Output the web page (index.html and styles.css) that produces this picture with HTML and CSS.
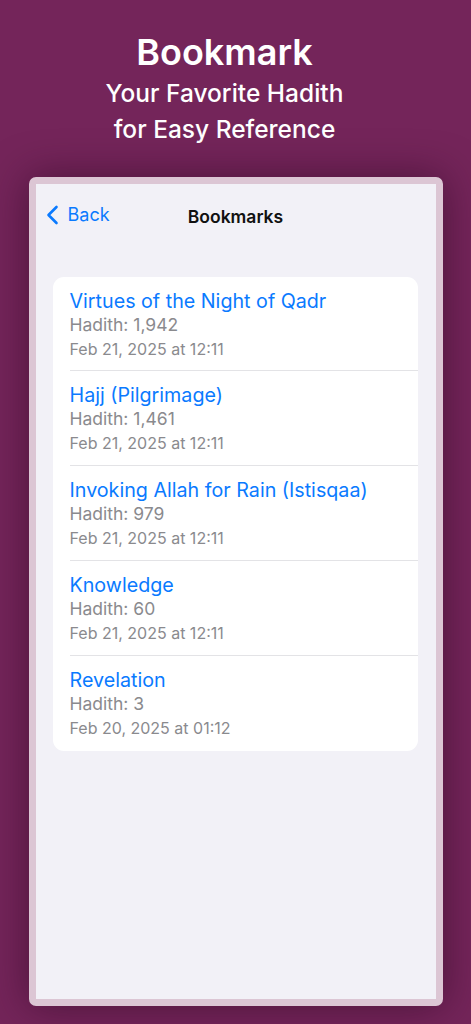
FILE: index.html
```html
<!DOCTYPE html>
<html>
<head>
<title>Bookmark</title>
<link rel="stylesheet" href="styles.css">
</head>
<body>

<div id="promo">
  <h1>Bookmark</h1>
  <p>Your Favorite Hadith<br>for Easy Reference</p>
</div>

<div id="device">
  <div id="screen">
    <div class="nav">
      <a class="back">
        <svg width="13" height="20" viewBox="0 0 13 20"><path d="M10.5 2 L2.5 10 L10.5 18" fill="none" stroke="#0a7aff" stroke-width="2.6" stroke-linecap="round" stroke-linejoin="round"/></svg>
        <span>Back</span>
      </a>
      <div class="nav-title">Bookmarks</div>
    </div>

    <div class="list">
      <div class="row">
        <div class="title">Virtues of the Night of Qadr</div>
        <div class="num">Hadith: 1,942</div>
        <div class="date">Feb 21, 2025 at 12:11</div>
      </div>
      <div class="row">
        <div class="title">Hajj (Pilgrimage)</div>
        <div class="num">Hadith: 1,461</div>
        <div class="date">Feb 21, 2025 at 12:11</div>
      </div>
      <div class="row">
        <div class="title">Invoking Allah for Rain (Istisqaa)</div>
        <div class="num">Hadith: 979</div>
        <div class="date">Feb 21, 2025 at 12:11</div>
      </div>
      <div class="row">
        <div class="title">Knowledge</div>
        <div class="num">Hadith: 60</div>
        <div class="date">Feb 21, 2025 at 12:11</div>
      </div>
      <div class="row">
        <div class="title">Revelation</div>
        <div class="num">Hadith: 3</div>
        <div class="date">Feb 20, 2025 at 01:12</div>
      </div>
    </div>
  </div>
</div>

</body>
</html>
```

FILE: styles.css
```css
body, html {
  margin: 0;
  height: 100%;
}

body {
  background-color: #74255a;
  font-family: Inter, "Noto Sans", sans-serif;
  display: flex;
  flex-direction: column;
  align-items: center;
}

#promo {
  color: white;
  text-align: center;
  padding-top: 31px;
  margin-right: 22px;
}
#promo h1 {
  margin: 0;
  font-size: 36px;
  font-weight: 600;
  line-height: 42px;
}
#promo p {
  margin: 2px 0 0;
  font-size: 24.5px;
  font-weight: 500;
  line-height: 36px;
}

#device {
  margin-top: 30px;
  width: 400px;
  height: 815px;
  border: 7px solid #dcc6d4;
  border-radius: 7px;
  background-color: #f2f1f7;
  box-shadow: 0 0 40px rgba(40, 5, 30, 0.55);
}

#screen {
  height: 100%;
}

.nav {
  height: 64px;
  position: relative;
  display: flex;
  align-items: center;
  justify-content: center;
}
.back {
  position: absolute;
  left: 10px;
  top: 20px;
  display: flex;
  align-items: center;
  gap: 9px;
  color: #0a7aff;
  font-size: 18px;
}
.nav-title {
  font-size: 17.5px;
  font-weight: 600;
  color: #111;
}

.list {
  margin: 29px 18px 0 17px;
  background: white;
  border-radius: 11px;
  padding-left: 17px;
}
.row {
  height: 95px;
  box-sizing: border-box;
  padding-top: 12px;
  border-bottom: 1px solid #e3e3e6;
}
.row:first-child {
  height: 94px;
}
.row:last-child {
  border-bottom: none;
}
.title {
  color: #0a7aff;
  font-size: 19.7px;
  line-height: 24px;
}
.num {
  color: #8a8a8e;
  font-size: 17.5px;
  line-height: 24px;
}
.date {
  color: #8a8a8e;
  font-size: 16px;
  line-height: 24px;
}
```
